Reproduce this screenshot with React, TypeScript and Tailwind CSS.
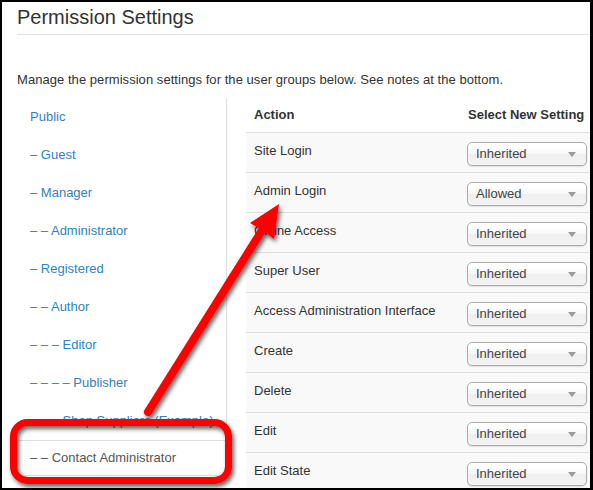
import React from "react";

const groups: { label: string; active?: boolean }[] = [
  { label: "Public" },
  { label: "– Guest" },
  { label: "– Manager" },
  { label: "– – Administrator" },
  { label: "– Registered" },
  { label: "– – Author" },
  { label: "– – – Editor" },
  { label: "– – – – Publisher" },
  { label: "– – – Shop Suppliers (Example)" },
  { label: "– – Contact Administrator", active: true },
];

const rows: [string, string][] = [
  ["Site Login", "Inherited"],
  ["Admin Login", "Allowed"],
  ["Offline Access", "Inherited"],
  ["Super User", "Inherited"],
  ["Access Administration Interface", "Inherited"],
  ["Create", "Inherited"],
  ["Delete", "Inherited"],
  ["Edit", "Inherited"],
  ["Edit State", "Inherited"],
];

function FakeSelect({ value }: { value: string }) {
  return (
    <div className="relative flex h-[24px] w-[120px] items-center rounded-[5px] border border-[#aaa] bg-[linear-gradient(#fff_20%,#f6f6f6_50%,#eee_52%,#f4f4f4_100%)] pl-[8px] text-[13px] leading-[22px] text-[#444] shadow-[0_1px_1px_rgba(0,0,0,0.1)]">
      <span>{value}</span>
      <span className="absolute right-[10px] top-[9px] h-0 w-0 border-x-[4px] border-t-[5px] border-x-transparent border-t-[#999]" />
    </div>
  );
}

export default function App() {
  return (
    <div
      className="relative h-[490px] w-[593px] overflow-hidden border-b-2 border-l-2 border-r-[3px] border-t-2 border-black bg-white text-[#333]"
      style={{ fontFamily: '"Liberation Sans", Arial, sans-serif' }}
    >
      <div className="pl-[15px] pt-[3px]">
        <h1 className="text-[20px] leading-[24px] font-normal text-[#333]">Permission Settings</h1>
        <div className="mt-[5px] h-px bg-[#e3e3e3]" />
        <p className="mt-[36px] text-[13px] leading-[18px] tracking-[0.05px] text-[#333]">
          Manage the permission settings for the user groups below. See notes at the bottom.
        </p>
        <div className="mt-[9px] flex">
          <ul className="w-[210px] shrink-0">
            {groups.map((g) =>
              g.active ? (
                <li
                  key={g.label}
                  className="flex h-[36px] items-center border-y border-l border-[#ddd] bg-white pl-[12px] text-[13px] text-[#555]"
                >
                  {g.label}
                </li>
              ) : (
                <li
                  key={g.label}
                  className="flex h-[38px] items-center border-r border-[#ddd] pl-[13px] text-[13px] text-[#2f82c2]"
                >
                  {g.label}
                </li>
              )
            )}
          </ul>
          <div className="ml-[19px] flex-1">
            <div className="flex h-[35px] items-center border-b border-[#ddd] text-[13px] font-bold text-[#333]">
              <div className="w-[214px] shrink-0 pl-[8px]">Action</div>
              <div className="whitespace-nowrap pl-[8px]">Select New Setting</div>
            </div>
            {rows.map(([action, value]) => (
              <div key={action} className="flex h-[40px] border-b border-[#ddd] bg-[#f9f9f9] text-[13px]">
                <div className="w-[214px] shrink-0 pl-[8px] pt-[9px] leading-[18px] text-[#333]">{action}</div>
                <div className="pl-[7px] pt-[9px]">
                  <FakeSelect value={value} />
                </div>
              </div>
            ))}
          </div>
        </div>
      </div>

      <svg className="pointer-events-none absolute left-[-2px] top-[-2px]" width="593" height="490" viewBox="0 0 593 490">
        <defs>
          <filter id="sh" x="-20%" y="-20%" width="140%" height="140%">
            <feDropShadow dx="2" dy="3" stdDeviation="2" floodColor="#000" floodOpacity="0.6" />
          </filter>
        </defs>
        <g filter="url(#sh)">
          <line x1="148" y1="412" x2="266" y2="224" stroke="#ff0000" strokeWidth="8" strokeLinecap="round" />
          <polygon points="279,204 274,239 262,230 250,223" fill="#ff0000" />
          <rect x="13.5" y="422.5" width="215" height="58" rx="14" ry="14" fill="none" stroke="#ff0000" strokeWidth="7" />
        </g>
      </svg>
    </div>
  );
}
